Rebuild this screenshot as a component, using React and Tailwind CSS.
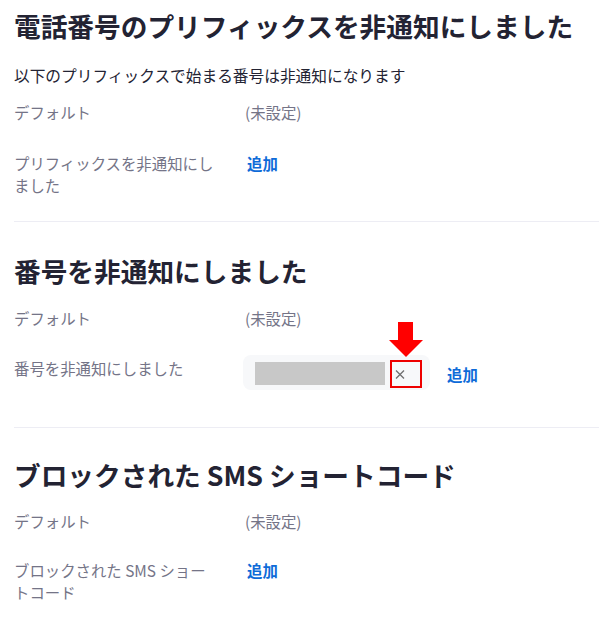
export default function App() {
  return (
    <div className="w-[599px] bg-white pl-[14px] pt-[8px] pb-[20px] text-[#232333] font-['Noto_Sans_CJK_JP','Noto_Sans',sans-serif]">
      {/* Section 1 */}
      <h1 className="text-[26.7px] leading-[36px] font-bold whitespace-nowrap">電話番号のプリフィックスを非通知にしました</h1>
      <p className="mt-[21px] text-[15.7px] leading-[22px] text-[#232333]">以下のプリフィックスで始まる番号は非通知になります</p>
      <div className="mt-[14px] flex text-[15.4px] leading-[22px]">
        <div className="w-[231px] shrink-0 text-[#747487]">デフォルト</div>
        <div className="text-[#747487]">(未設定)</div>
      </div>
      <div className="mt-[29px] flex text-[15.4px] leading-[22px]">
        <div className="w-[231px] shrink-0 pr-[26px] text-[#747487]">プリフィックスを非通知にしました</div>
        <div className="pl-[2px] font-semibold text-[#0e6bd8]">追加</div>
      </div>
      <div className="mt-[25px] h-px bg-[#ededf4]" />

      {/* Section 2 */}
      <h2 className="mt-[31px] text-[26.7px] leading-[36px] font-bold">番号を非通知にしました</h2>
      <div className="mt-[18px] flex text-[15.4px] leading-[22px]">
        <div className="w-[231px] shrink-0 text-[#747487]">デフォルト</div>
        <div className="text-[#747487]">(未設定)</div>
      </div>
      <div className="mt-[26px] flex items-start text-[15.4px] leading-[22px]">
        <div className="w-[231px] shrink-0 pt-[2px] text-[#747487]">番号を非通知にしました</div>
        <div className="-ml-[2px] flex items-center">
          <div className="flex items-center h-[35px] pl-[12px] pr-[8px] rounded-[8px] bg-[#f7f8fa]">
            <div className="w-[130px] h-[23px] bg-[#c8c8c8] mt-[2px]" />
            <div className="relative ml-[5px] mt-[2px] w-[32px] h-[28px] border-2 border-[#ee0000] flex items-center pl-[3px]">
              <svg width="10" height="9" viewBox="0 0 10 9" className="mt-[2px]">
                <path d="M1 0.5 L9 8.5 M9 0.5 L1 8.5" stroke="#6f6f6f" strokeWidth="1.3" fill="none" />
              </svg>
              <svg width="34" height="35" viewBox="0 0 34 35" className="absolute left-[-3px] top-[-40px]">
                <polygon points="9,0 24,0 24,18 34,18 17,35 0,18 9,18" fill="#ff0000" />
              </svg>
            </div>
          </div>
          <div className="ml-[17px] mt-[3px] font-semibold text-[#0e6bd8]">追加</div>
        </div>
      </div>
      <div className="mt-[37px] h-px bg-[#ededf4]" />

      {/* Section 3 */}
      <h2 className="mt-[29px] text-[26.7px] leading-[36px] font-bold">ブロックされた SMS ショートコード</h2>
      <div className="mt-[17px] flex text-[15.4px] leading-[22px]">
        <div className="w-[231px] shrink-0 text-[#747487]">デフォルト</div>
        <div className="text-[#747487]">(未設定)</div>
      </div>
      <div className="mt-[27px] flex text-[15.4px] leading-[22px]">
        <div className="w-[231px] shrink-0 pr-[26px] text-[#747487]">ブロックされた SMS ショートコード</div>
        <div className="pl-[2px] font-semibold text-[#0e6bd8]">追加</div>
      </div>
    </div>
  );
}
